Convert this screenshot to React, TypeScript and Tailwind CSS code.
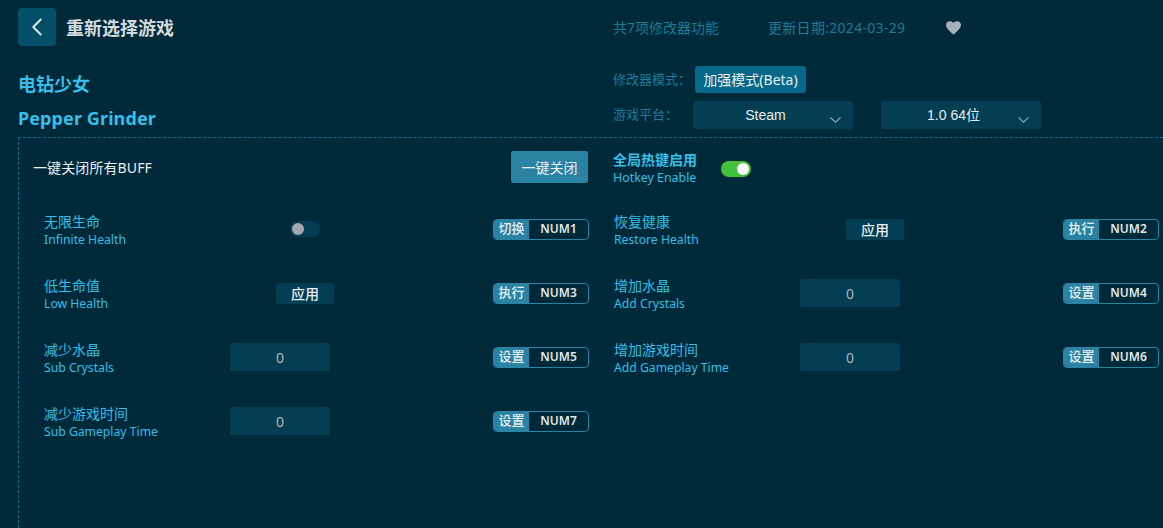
import { ChevronLeft } from "lucide-react";

const FONT = "font-['Noto_Sans','Noto_Sans_CJK_SC',sans-serif]";

type Control = "toggle" | "apply" | "input";

type Cheat = {
  zh: string;
  en: string;
  control: Control;
  action: string;
  hotkey: string;
};

const CHEATS: Cheat[] = [
  { zh: "无限生命", en: "Infinite Health", control: "toggle", action: "切换", hotkey: "NUM1" },
  { zh: "恢复健康", en: "Restore Health", control: "apply", action: "执行", hotkey: "NUM2" },
  { zh: "低生命值", en: "Low Health", control: "apply", action: "执行", hotkey: "NUM3" },
  { zh: "增加水晶", en: "Add Crystals", control: "input", action: "设置", hotkey: "NUM4" },
  { zh: "减少水晶", en: "Sub Crystals", control: "input", action: "设置", hotkey: "NUM5" },
  { zh: "增加游戏时间", en: "Add Gameplay Time", control: "input", action: "设置", hotkey: "NUM6" },
  { zh: "减少游戏时间", en: "Sub Gameplay Time", control: "input", action: "设置", hotkey: "NUM7" },
];

function Select({ label }: { label: string }) {
  return (
    <div className="relative flex h-[28px] w-[160px] items-center justify-center rounded-[3px] bg-[#033e53] pr-[15px] text-[14px] text-[#e8eef0] font-['Liberation_Sans','Noto_Sans_CJK_SC',sans-serif]">
      {label}
      <svg
        width="11"
        height="6"
        viewBox="0 0 11 6"
        fill="none"
        stroke="#8ea2ab"
        strokeWidth="1.2"
        className="absolute right-[12px] top-[16px]"
      >
        <path d="M0.5 0.5 5.5 5.2 10.5 0.5" />
      </svg>
    </div>
  );
}

function RowControl({ type }: { type: Control }) {
  if (type === "toggle") {
    return (
      <div className="mx-auto flex h-[16px] w-[30px] items-center rounded-full bg-[#033e53] pl-[2px]">
        <div className="h-[12px] w-[12px] rounded-full bg-[#a3a9ae]" />
      </div>
    );
  }
  if (type === "apply") {
    return (
      <div className="mx-auto flex h-[21px] w-[58px] items-center justify-center rounded-[3px] bg-[#033e53] text-[14px] font-medium text-[#e8eef0]">
        应用
      </div>
    );
  }
  return (
    <div className="flex h-[28px] w-[100px] items-center justify-center rounded-[3px] bg-[#033e53] text-[14px] text-[#a9b9c0]">
      0
    </div>
  );
}

function CheatRow({ cheat }: { cheat: Cheat }) {
  return (
    <div className="flex h-[64px] items-center pl-[25px]">
      <div className="w-[186px] pt-[4px]">
        <div className="text-[14px] leading-[18px] text-[#33bfe6]">{cheat.zh}</div>
        <div className="text-[12.2px] leading-[18px] text-[#33bfe6]">{cheat.en}</div>
      </div>
      <div className="w-[150px]">
        <RowControl type={cheat.control} />
      </div>
      <div className="ml-[113px] flex h-[21px] w-[96px] overflow-hidden rounded-[4px] border border-[#2a83a3]">
        <div className="flex w-[35px] items-center justify-center bg-[#2a83a3] pb-[1px] text-[13px] font-medium text-[#e8eef0]">
          {cheat.action}
        </div>
        <div className="flex flex-1 items-center justify-center text-[12px] font-semibold text-[#e0e6e9]">
          {cheat.hotkey}
        </div>
      </div>
    </div>
  );
}

export default function App() {
  return (
    <div className={`flex h-[528px] w-[1163px] flex-col overflow-hidden bg-[#002a3a] ${FONT}`}>
      {/* Header */}
      <div className="flex h-[137px] pl-[18px]">
        <div className="w-[595px] pt-[8px]">
          <div className="flex items-center">
            <div className="flex h-[38px] w-[38px] items-center justify-center rounded-[4px] bg-[#035068]">
              <ChevronLeft size={30} strokeWidth={1.5} className="text-[#dfe7ea]" />
            </div>
            <span className="ml-[10px] mt-[3px] text-[18px] font-bold text-[#d3d9dc]">重新选择游戏</span>
          </div>
          <div className="mt-[22px] text-[18px] font-bold leading-[32px] text-[#36bfe8]">电钻少女</div>
          <div className="mt-[2px] text-[18px] font-bold leading-[32px] tracking-[0.1px] text-[#36bfe8]">
            Pepper Grinder
          </div>
        </div>
        <div className="flex-1">
          <div className="flex h-[56px] items-center text-[14px] text-[#1f7a96]">
            <span className="w-[155px] pb-[2px]">共7项修改器功能</span>
            <span className="w-[178px] pb-[2px] tracking-[0.3px]">更新日期:2024-03-29</span>
            <svg width="15" height="14" viewBox="0 0 24 22" className="text-[#a5b1b8]">
              <path
                fill="currentColor"
                d="M12 21.5 10.3 20C4.2 14.5 0 10.7 0 6.2 0 2.7 2.7 0 6.2 0c2.2 0 4.3 1 5.8 2.7C13.5 1 15.6 0 17.8 0 21.3 0 24 2.7 24 6.2c0 4.5-4.2 8.3-10.3 13.8Z"
              />
            </svg>
          </div>
          <div className="mt-[9px] flex h-[28px] items-center text-[13px] text-[#1f7a96]">
            <span className="w-[82px] pt-[1px]">修改器模式：</span>
            <div className="flex h-[27px] w-[111px] items-center justify-center rounded-[3px] bg-[#07688a] text-[14px] text-[#e8eef0]">
              加强模式(Beta)
            </div>
          </div>
          <div className="mt-[8px] flex h-[28px] items-center text-[13px] text-[#1f7a96]">
            <span className="w-[80px]">游戏平台：</span>
            <Select label="Steam" />
            <div className="w-[28px]" />
            <Select label="1.0 64位" />
          </div>
        </div>
      </div>

      {/* Panel */}
      <div className="ml-[18px] flex-1 border-l border-t border-dashed border-[#0f6f8a]">
        <div className="flex h-[59px] items-start pt-[13px]">
          <div className="flex w-[570px] items-center">
            <span className="ml-[14px] w-[478px] text-[14px] tracking-[0.1px] text-[#e8eef0]">一键关闭所有BUFF</span>
            <div className="flex h-[32px] w-[77px] items-center justify-center rounded-[2px] bg-[#2a83a3] text-[14px] text-[#e8eef0]">
              一键关闭
            </div>
          </div>
          <div className="ml-[24px] flex items-center">
            <div className="w-[108px] text-[#36bfe8]">
              <div className="text-[14px] font-bold leading-[18px]">全局热键启用</div>
              <div className="text-[12.4px] leading-[18px]">Hotkey Enable</div>
            </div>
            <div className="flex h-[16px] w-[30px] items-center justify-end rounded-full bg-[#43c23b] pr-[2px]">
              <div className="h-[12px] w-[12px] rounded-full bg-white" />
            </div>
          </div>
        </div>
        <div className="grid w-[1140px] grid-cols-2">
          {CHEATS.map((cheat) => (
            <CheatRow key={cheat.hotkey} cheat={cheat} />
          ))}
        </div>
      </div>
    </div>
  );
}
